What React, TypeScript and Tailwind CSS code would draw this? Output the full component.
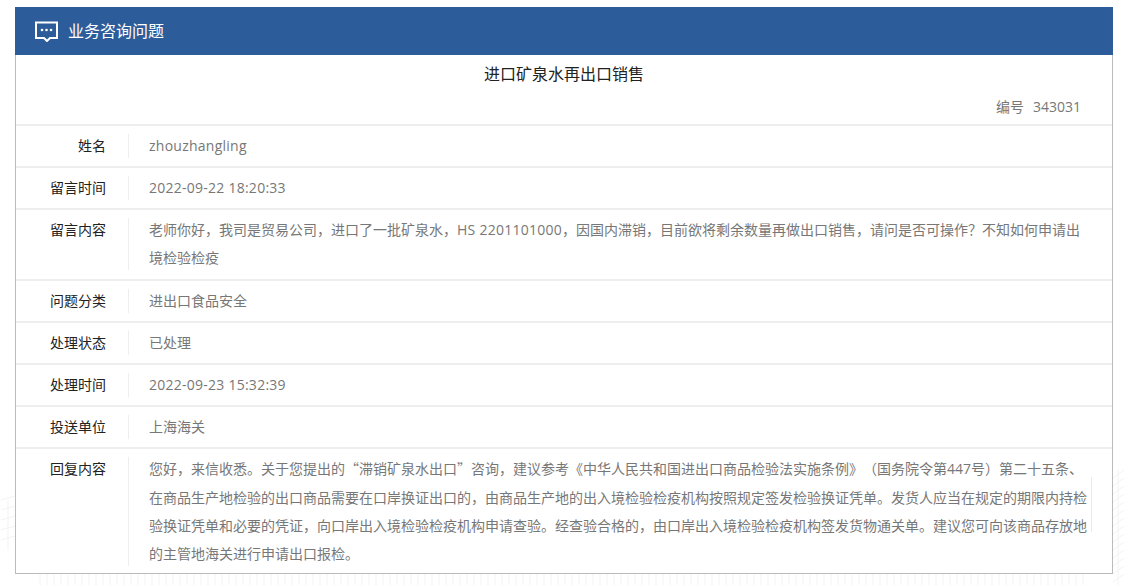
import type { ReactNode } from 'react';

const rows: { label: string; value: ReactNode; h: string; track: string }[] = [
  { label: '姓名', value: 'zhouzhangling', h: 'h-[42px]', track: 'tracking-[0.25px]' },
  { label: '留言时间', value: '2022-09-22 18:20:33', h: 'h-[42px]', track: 'tracking-[0.25px]' },
  {
    label: '留言内容',
    value: (
      <>
        老师你好，我司是贸易公司，进口了一批矿泉水，<span className="tracking-[0.25px]">HS 2201101000</span>，因国内滞销，目前欲将剩余数量再做出口销售，请问是否可操作？不知如何申请出境检验检疫
      </>
    ),
    h: 'h-[71px]',
    track: '',
  },
  { label: '问题分类', value: '进出口食品安全', h: 'h-[42px]', track: '' },
  { label: '处理状态', value: '已处理', h: 'h-[42px]', track: '' },
  { label: '处理时间', value: '2022-09-23 15:32:39', h: 'h-[42px]', track: 'tracking-[0.25px]' },
  { label: '投送单位', value: '上海海关', h: 'h-[42px]', track: '' },
];

// faint line art of the page background, only visible in the margins
const bottomLines = Array.from({ length: 150 }, (_, i) => 40 + i * 7);
const sideLines = Array.from({ length: 14 }, (_, i) => 470 + i * 8);

export default function App() {
  return (
    <div className="relative h-[585px] overflow-hidden bg-white pl-[15px] pr-[11px] pt-[7px] font-['Open_Sans','Noto_Sans_CJK_SC',sans-serif] [text-spacing-trim:space-all]">
      <svg className="absolute left-0 top-0" width="1124" height="585" fill="none" stroke="#f3f3f3">
        {bottomLines.map((x) => (
          <path key={x} d={`M${x} 574v11`} />
        ))}
        {sideLines.map((y) => (
          <path key={y} d={`M1113 ${y + 8}l11-8`} />
        ))}
        <path d="M1118 470v115M1 500l14-4M1 510l14-4M1 520l14-4M1 530l14-4M1 540l14-4M8 500v50" />
      </svg>

      <div className="relative flex h-12 items-center bg-[#2d5c9a] pl-5 text-white">
        <svg width="23" height="21" viewBox="0 0 23 21" fill="none" stroke="white" strokeWidth="2">
          <path d="M1 1.5h21v15.5h-7l-3 3-3-3H1z" />
          <circle cx="7" cy="9" r="1.3" fill="white" stroke="none" />
          <circle cx="11.5" cy="9" r="1.3" fill="white" stroke="none" />
          <circle cx="16" cy="9" r="1.3" fill="white" stroke="none" />
        </svg>
        <span className="ml-[10px] text-base">业务咨询问题</span>
      </div>

      <div className="relative h-[519px] border-x border-b border-[#bbbbbb] bg-white">
        <h1 className="pt-[9px] text-center text-base leading-5 text-[#222222]">进口矿泉水再出口销售</h1>
        <p className="mt-[13px] pr-[31px] text-right text-sm leading-5 text-[#777777]">
          编号<span className="ml-[9px]">343031</span>
        </p>

        <div className="mt-[7px]">
          {rows.map((row) => (
            <div key={row.label} className={`flex border-t-2 border-[#eeeeee] pt-2 ${row.h}`}>
              <div className="w-[90px] shrink-0 text-right text-sm leading-6 text-[#222222]">{row.label}</div>
              <div className="ml-[22px] self-start border-l border-[#eeeeee] pl-5">
                <div className={`-my-0.5 w-[942px] text-sm leading-7 text-[#777777] ${row.track}`}>{row.value}</div>
              </div>
            </div>
          ))}
          <div className="flex border-t-2 border-[#eeeeee] pt-2">
            <div className="w-[90px] shrink-0 text-right text-sm leading-6 text-[#222222]">回复内容</div>
            <div className="ml-[22px] self-start border-l border-[#eeeeee] pl-5">
              <div className="-mb-px -mt-[3px] w-[942px] font-['Noto_Sans_CJK_SC',sans-serif] text-sm leading-7 text-[#777777]">
                您好，来信收悉。关于您提出的“滞销矿泉水出口”咨询，建议参考《中华人民共和国进出口商品检验法实施条例》（国务院令第<span className="font-['Open_Sans']">447</span>号）第二十五条、在商品生产地检验的出口商品需要在口岸换证出口的，由商品生产地的出入境检验检疫机构按照规定签发检验换证凭单。发货人应当在规定的期限内持检验换证凭单和必要的凭证，向口岸出入境检验检疫机构申请查验。经查验合格的，由口岸出入境检验检疫机构签发货物通关单。建议您可向该商品存放地的主管地海关进行申请出口报检。
              </div>
            </div>
          </div>
        </div>
        {/* thin blue rule beside the reply text */}
        <div className="absolute left-[1075px] top-[422px] h-[55px] w-px bg-[#e3ebf4]" />
      </div>
    </div>
  );
}
